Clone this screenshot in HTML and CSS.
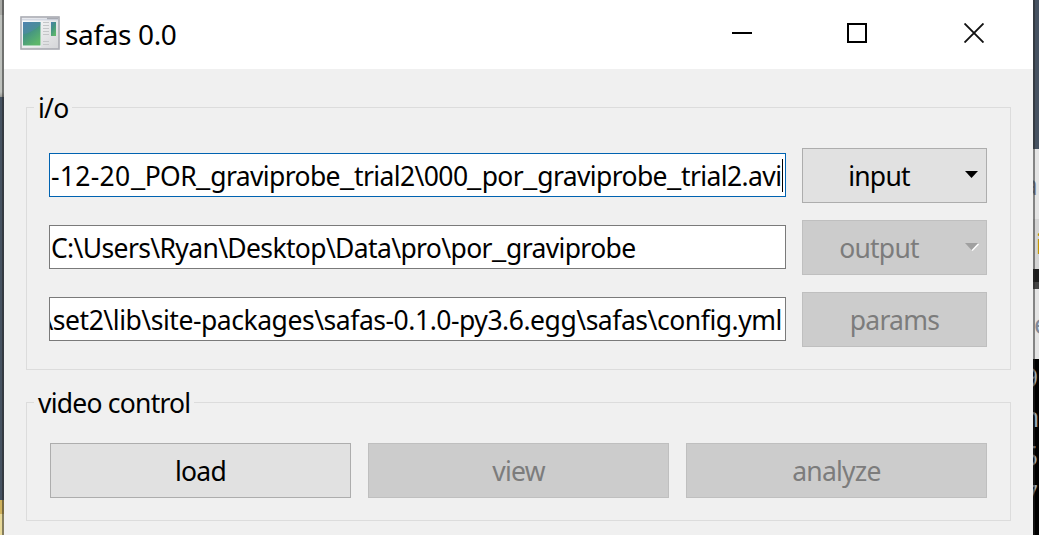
FILE: index.html
```html
<!DOCTYPE html>
<html lang="en">
<head>
<meta charset="utf-8">
<title>safas 0.0</title>
<link rel="stylesheet" href="styles.css">
</head>
<body>
<div class="desktop">
  <div class="edge-left"></div>
  <main class="window">
    <header class="titlebar">
      <svg class="app-icon" width="40" height="34" viewBox="0 0 40 34">
        <defs>
          <linearGradient id="pane" x1="0" y1="0" x2="0.6" y2="1"><stop offset="0" stop-color="#4b7fae"/><stop offset=".5" stop-color="#459582"/><stop offset="1" stop-color="#5db66b"/></linearGradient>
          <linearGradient id="frame" x1="0" y1="0" x2="1" y2="1"><stop offset="0" stop-color="#fff"/><stop offset="1" stop-color="#d4d5d8"/></linearGradient>
        </defs>
        <rect x="1" y="1" width="38" height="32" fill="url(#frame)" stroke="#a9abb2" stroke-width="1.6"/>
        <path d="M2 3.5H38" stroke="#d3d8e2" stroke-width="2"/>
        <path d="M27 2.5H38" stroke="#a7aab2" stroke-width="1.5"/>
        <rect x="2.5" y="5.5" width="18.5" height="25" fill="#f2f7fa"/>
        <rect x="3" y="6" width="17.5" height="23.5" fill="url(#pane)"/>
        <path d="M3 18Q10 18 20.500 9V6H3Z" fill="#5488b4" opacity=".45"/>
        <path d="M23 6.500H29M23 9.500H29M23 12.500H29M23 15.500H29M23 18.500H29M23 25.500H29M23 28.500H29" stroke="#c4c6c8"/>
        <rect x="31" y="6" width="5" height="14" fill="url(#pane)"/>
      </svg>
      <h1 class="title">safas 0.0</h1>
      <div class="controls">
        <svg width="20" height="20"><path d="M0 10H20" stroke="#000" stroke-width="2"/></svg>
        <svg width="20" height="20"><rect x="1" y="1" width="18" height="18" fill="none" stroke="#000" stroke-width="2"/></svg>
        <svg width="20" height="20"><path d="M.5 .5L19.500 19.500M19.500 .5L.5 19.500" stroke="#111" stroke-width="1.900"/></svg>
      </div>
    </header>
    <section class="group io">
      <h2 class="legend">i/o</h2>
      <div class="row">
        <div class="field focused"><span class="value v1"><span class="date">-12-20</span><span class="u">_</span>POR<span class="u">_</span>graviprobe<span class="u">_</span>trial2\000<span class="u">_</span>por<span class="u">_</span>graviprobe<span class="u">_</span>trial2.avi</span><i class="caret"></i></div>
        <div class="button menu">input<svg class="arrow" width="14" height="8"><path d="M0 0H13L6.500 7Z" fill="#000"/></svg></div>
      </div>
      <div class="row">
        <div class="field"><span class="value v2">C:\Users\Ryan\Desktop\Data\pro\por<span class="u">_</span>graviprobe</span></div>
        <div class="button menu disabled">output<svg class="arrow" width="14" height="8"><path d="M7 7.500L13.500 1" stroke="#fff" stroke-width="1.500"/><path d="M0 0H13L6.500 7Z" fill="#a0a0a0"/></svg></div>
      </div>
      <div class="row">
        <div class="field end"><span class="value v3">\set2\lib\site-packages\safas-0.1.0-py3.6.egg\safas\config.yml</span></div>
        <div class="button disabled">params</div>
      </div>
    </section>
    <section class="group video">
      <h2 class="legend">video control</h2>
      <div class="actions">
        <div class="button">load</div>
        <div class="button disabled">view</div>
        <div class="button disabled">analyze</div>
      </div>
    </section>
  </main>
  <aside class="edge-right">
    <div class="slate"></div>
    <div class="pale"><span class="bit a">a</span></div>
    <div class="tab"><span class="bit i">i</span></div>
    <div class="bar"></div>
    <div class="pale2"><span class="bit e">e</span></div>
    <div class="console"><span class="bit">9</span><span class="bit">n</span><span class="bit">5</span><span class="bit">7</span></div>
  </aside>
</div>
</body>
</html>
```
FILE: styles.css
```css
* { box-sizing: border-box; }
body { margin: 0; overflow: hidden; font-family: "Noto Sans", sans-serif; font-size: 26.5px; color: #000; }
.desktop { display: grid; grid-template-columns: 4px 1029px 6px; height: 535px; }
.edge-left { background: linear-gradient(90deg, transparent 2px, rgba(35,35,35,.5) 2px), linear-gradient(#a9aaa6 0 15px, #bec1bd 15px 92px, #979894 97px, #465261 97px 500px, #ceb15d 500px 514px, #e8d999 514px); }
.window { background: #f0f0f0; height: 535px; }
.titlebar { display: flex; align-items: center; height: 69px; padding: 0 49px 3px 16px; background: #fff; }
.app-icon { flex: none; margin-top: -1px; }
.title { margin: 2px 0 0 5px; font-size: 28px; font-weight: 400; line-height: 40px; letter-spacing: -.35px; white-space: nowrap; }
.controls { display: flex; gap: 97px; margin-left: auto; }
.controls svg { display: block; }
.controls svg:first-child { margin-right: -2px; }
.group { position: relative; width: 985px; margin-left: 22px; border: 1px solid #dcdcdc; }
.io { height: 263px; margin-top: 38px; padding: 40px 23px 0 22px; display: flex; flex-direction: column; gap: 17px; }
.video { height: 119px; margin-top: 32px; padding: 40px 23px 0; }
.legend { position: absolute; left: 7px; top: -18px; margin: 0; padding: 0 4px; background: #f0f0f0; font-size: 26.5px; font-weight: 400; line-height: 36px; letter-spacing: -.77px; white-space: nowrap; }
.row { display: flex; align-items: center; justify-content: space-between; height: 55px; }
.field { position: relative; display: flex; width: 737px; height: 44px; margin-bottom: 1px; padding-left: 1px; border: 1px solid #7a7a7a; background: #fff; overflow: hidden; white-space: nowrap; line-height: 44px; }
.focused { border-color: #0063b1; }
.end { justify-content: flex-end; padding-right: 3px; }
.value { flex: none; }
.v1 { letter-spacing: -.62px; }
.date { letter-spacing: .3px; }
.v2 { letter-spacing: -.64px; }
.v3 { letter-spacing: -.46px; }
.u { display: inline-block; width: 14.2px; letter-spacing: 0; transform: scaleX(1.21); transform-origin: left; }
.caret { position: absolute; left: 732px; top: 5px; width: 1px; height: 33px; background: #000; }
.button { position: relative; display: flex; align-items: center; justify-content: center; width: 185px; height: 55px; border: 1px solid #adadad; background: #e1e1e1; letter-spacing: -.77px; }
.menu { padding-right: 31px; }
.disabled { border-color: #bfbfbf; background: #ccc; color: #7c7c7c; }
.arrow { position: absolute; right: 7px; top: 22px; }
.actions { display: grid; grid-template-columns: repeat(3, 301px); gap: 17px; }
.actions .button { width: 301px; }
.edge-right { position: relative; height: 535px; overflow: hidden; display: flex; flex-direction: column; color: #808998; }
.edge-right::after { content: ""; position: absolute; left: 0; top: 0; width: 2px; height: 100%; background: rgba(35,35,35,.5); }
.edge-right > div { flex: none; overflow: hidden; }
.slate { height: 149px; background: #465261; }
.pale { height: 70px; background: #e4e4e4; padding-top: 18px; }
.tab { height: 50px; background: #d4d4d4; }
.bar { height: 20px; background: linear-gradient(#1e1e1e 0 13px, #444 13px); }
.pale2 { height: 70px; background: #e4e4e4; padding-top: 17px; }
.console { height: 176px; background: #000; color: #9aa6b5; }
.bit { display: block; line-height: 36px; }
.a { margin-left: -10px; }
.i { margin-left: 3px; padding-top: 7px; color: #b88700; }
.e { margin-left: 1px; }
.console .bit { margin-left: -10px; line-height: 39px; }
```
